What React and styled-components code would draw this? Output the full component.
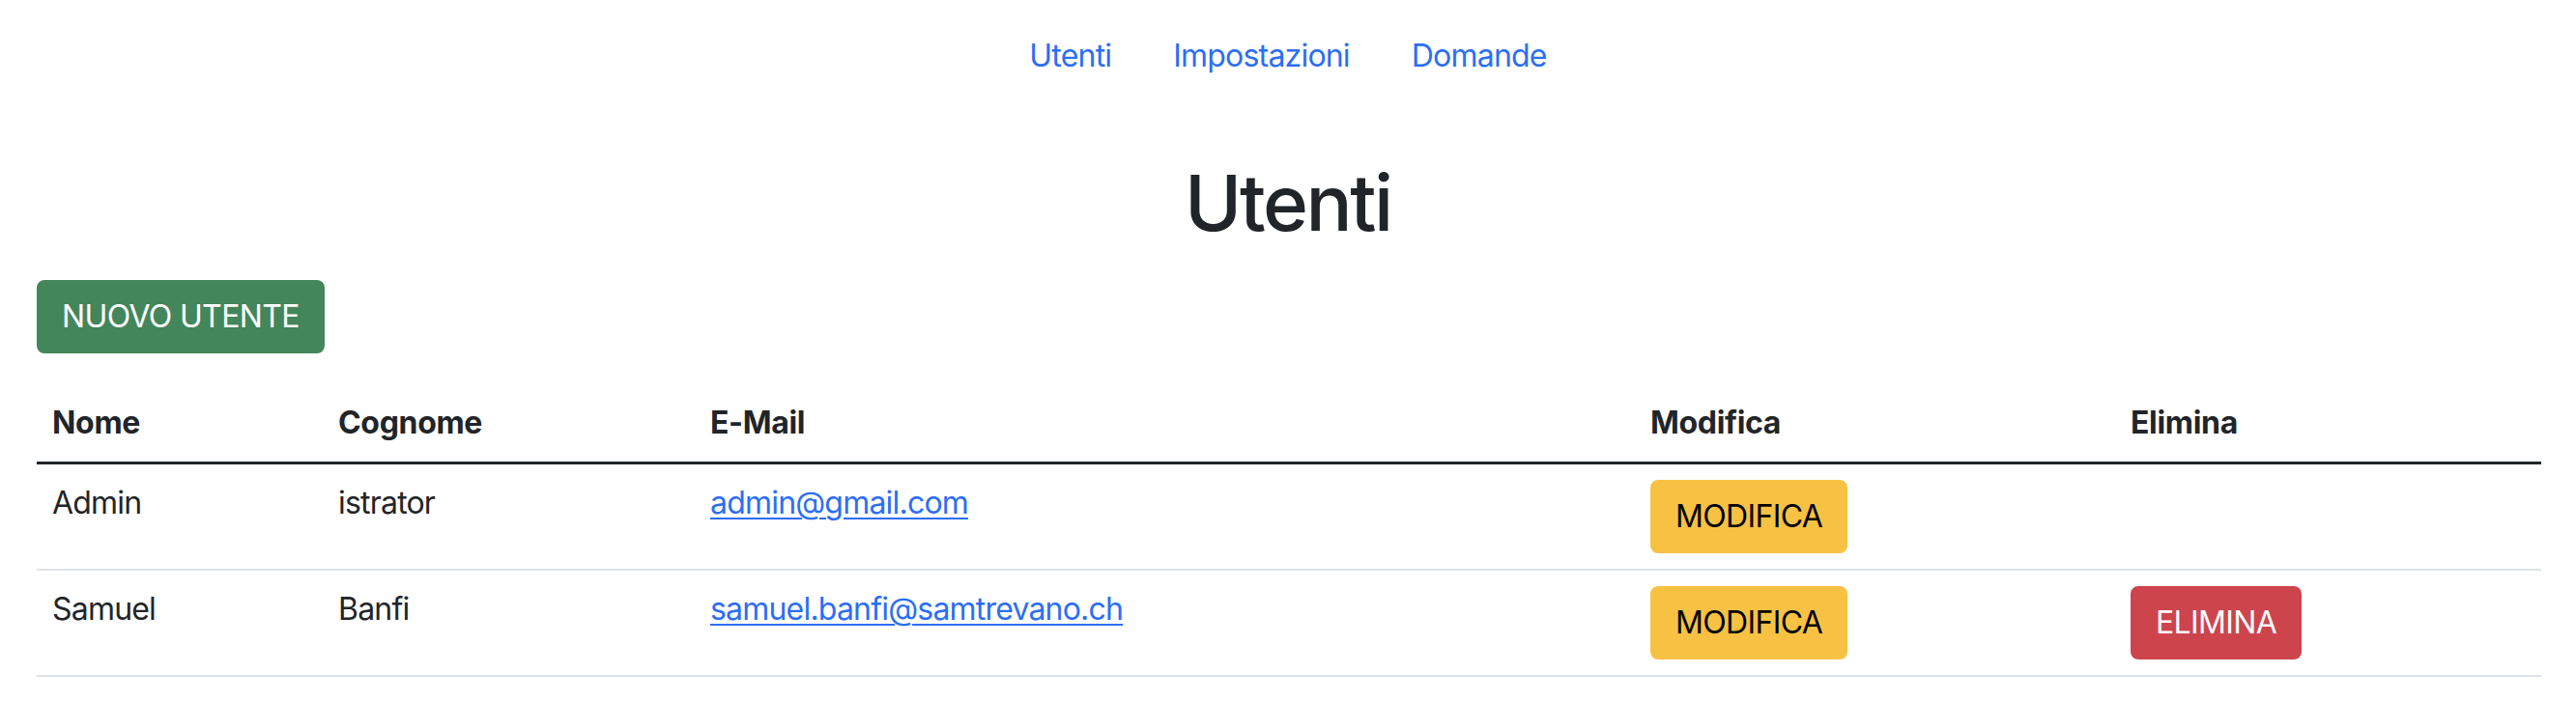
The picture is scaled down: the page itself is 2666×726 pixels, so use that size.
import React from "react";
import styled, { createGlobalStyle } from "styled-components";

const GlobalStyle = createGlobalStyle`
  * { box-sizing: border-box; }
  body {
    margin: 0;
    background: #fff;
    color: #212529;
    font-family: "Inter", "Liberation Sans", sans-serif;
    font-size: 32px;
    line-height: 48px;
    letter-spacing: -0.025em;
  }
`;

const Page = styled.div`
  padding: 0 38px;
`;

const Nav = styled.nav`
  display: flex;
  justify-content: center;
  padding-top: 18px;
`;

const NavLink = styled.a`
  padding: 16px 32px;
  color: #2c6ef6;
  text-decoration: none;
  font-size: 32px;
  line-height: 48px;
`;

const Title = styled.h1`
  margin: 64px 0 32px;
  text-align: center;
  font-size: 80px;
  line-height: 96px;
  font-weight: 500;
  letter-spacing: -0.03em;
  color: #212529;
`;

const Button = styled.button`
  display: inline-block;
  padding: 12px 24px;
  border: 2px solid ${(p) => p.$bg};
  border-radius: 8px;
  background: ${(p) => p.$bg};
  color: ${(p) => p.$fg};
  font-family: inherit;
  font-size: 32px;
  line-height: 48px;
  font-weight: 400;
  letter-spacing: -0.02em;
  cursor: pointer;
`;

const Toolbar = styled.div`
  margin-bottom: 32px;
`;

const Table = styled.table`
  width: 100%;
  border-collapse: separate;
  border-spacing: 0;
  table-layout: fixed;
  vertical-align: top;
`;

const Th = styled.th`
  padding: 16px;
  text-align: left;
  font-weight: 700;
  letter-spacing: -0.01em;
  border-bottom: 3px solid #212529;
`;

const Td = styled.td`
  padding: 16px;
  vertical-align: top;
  border-bottom: 2px solid #dee2e6;
`;

const MailLink = styled.a`
  color: #2c6ef6;
  text-decoration: underline;
  text-underline-offset: 4px;
  text-decoration-thickness: 2px;
`;

const users = [
  { nome: "Admin", cognome: "istrator", email: "admin@gmail.com", canDelete: false },
  { nome: "Samuel", cognome: "Banfi", email: "samuel.banfi@samtrevano.ch", canDelete: true },
];

const columns = [
  { label: "Nome", width: 296 },
  { label: "Cognome", width: 385 },
  { label: "E-Mail", width: 973 },
  { label: "Modifica", width: 497 },
  { label: "Elimina", width: 441 },
];

export default function App() {
  return (
    <Page>
      <GlobalStyle />
      <Nav>
        <NavLink href="#">Utenti</NavLink>
        <NavLink href="#">Impostazioni</NavLink>
        <NavLink href="#">Domande</NavLink>
      </Nav>
      <Title>Utenti</Title>
      <Toolbar>
        <Button $bg="#43865b" $fg="#fff">NUOVO UTENTE</Button>
      </Toolbar>
      <Table>
        <colgroup>
          {columns.map((c) => (
            <col key={c.label} style={{ width: c.width }} />
          ))}
        </colgroup>
        <thead>
          <tr>
            {columns.map((c) => (
              <Th key={c.label}>{c.label}</Th>
            ))}
          </tr>
        </thead>
        <tbody>
          {users.map((u) => (
            <tr key={u.email}>
              <Td>{u.nome}</Td>
              <Td>{u.cognome}</Td>
              <Td>
                <MailLink href={`mailto:${u.email}`}>{u.email}</MailLink>
              </Td>
              <Td>
                <Button $bg="#f7c244" $fg="#000">MODIFICA</Button>
              </Td>
              <Td>
                {u.canDelete && <Button $bg="#cd444c" $fg="#fff">ELIMINA</Button>}
              </Td>
            </tr>
          ))}
        </tbody>
      </Table>
    </Page>
  );
}
